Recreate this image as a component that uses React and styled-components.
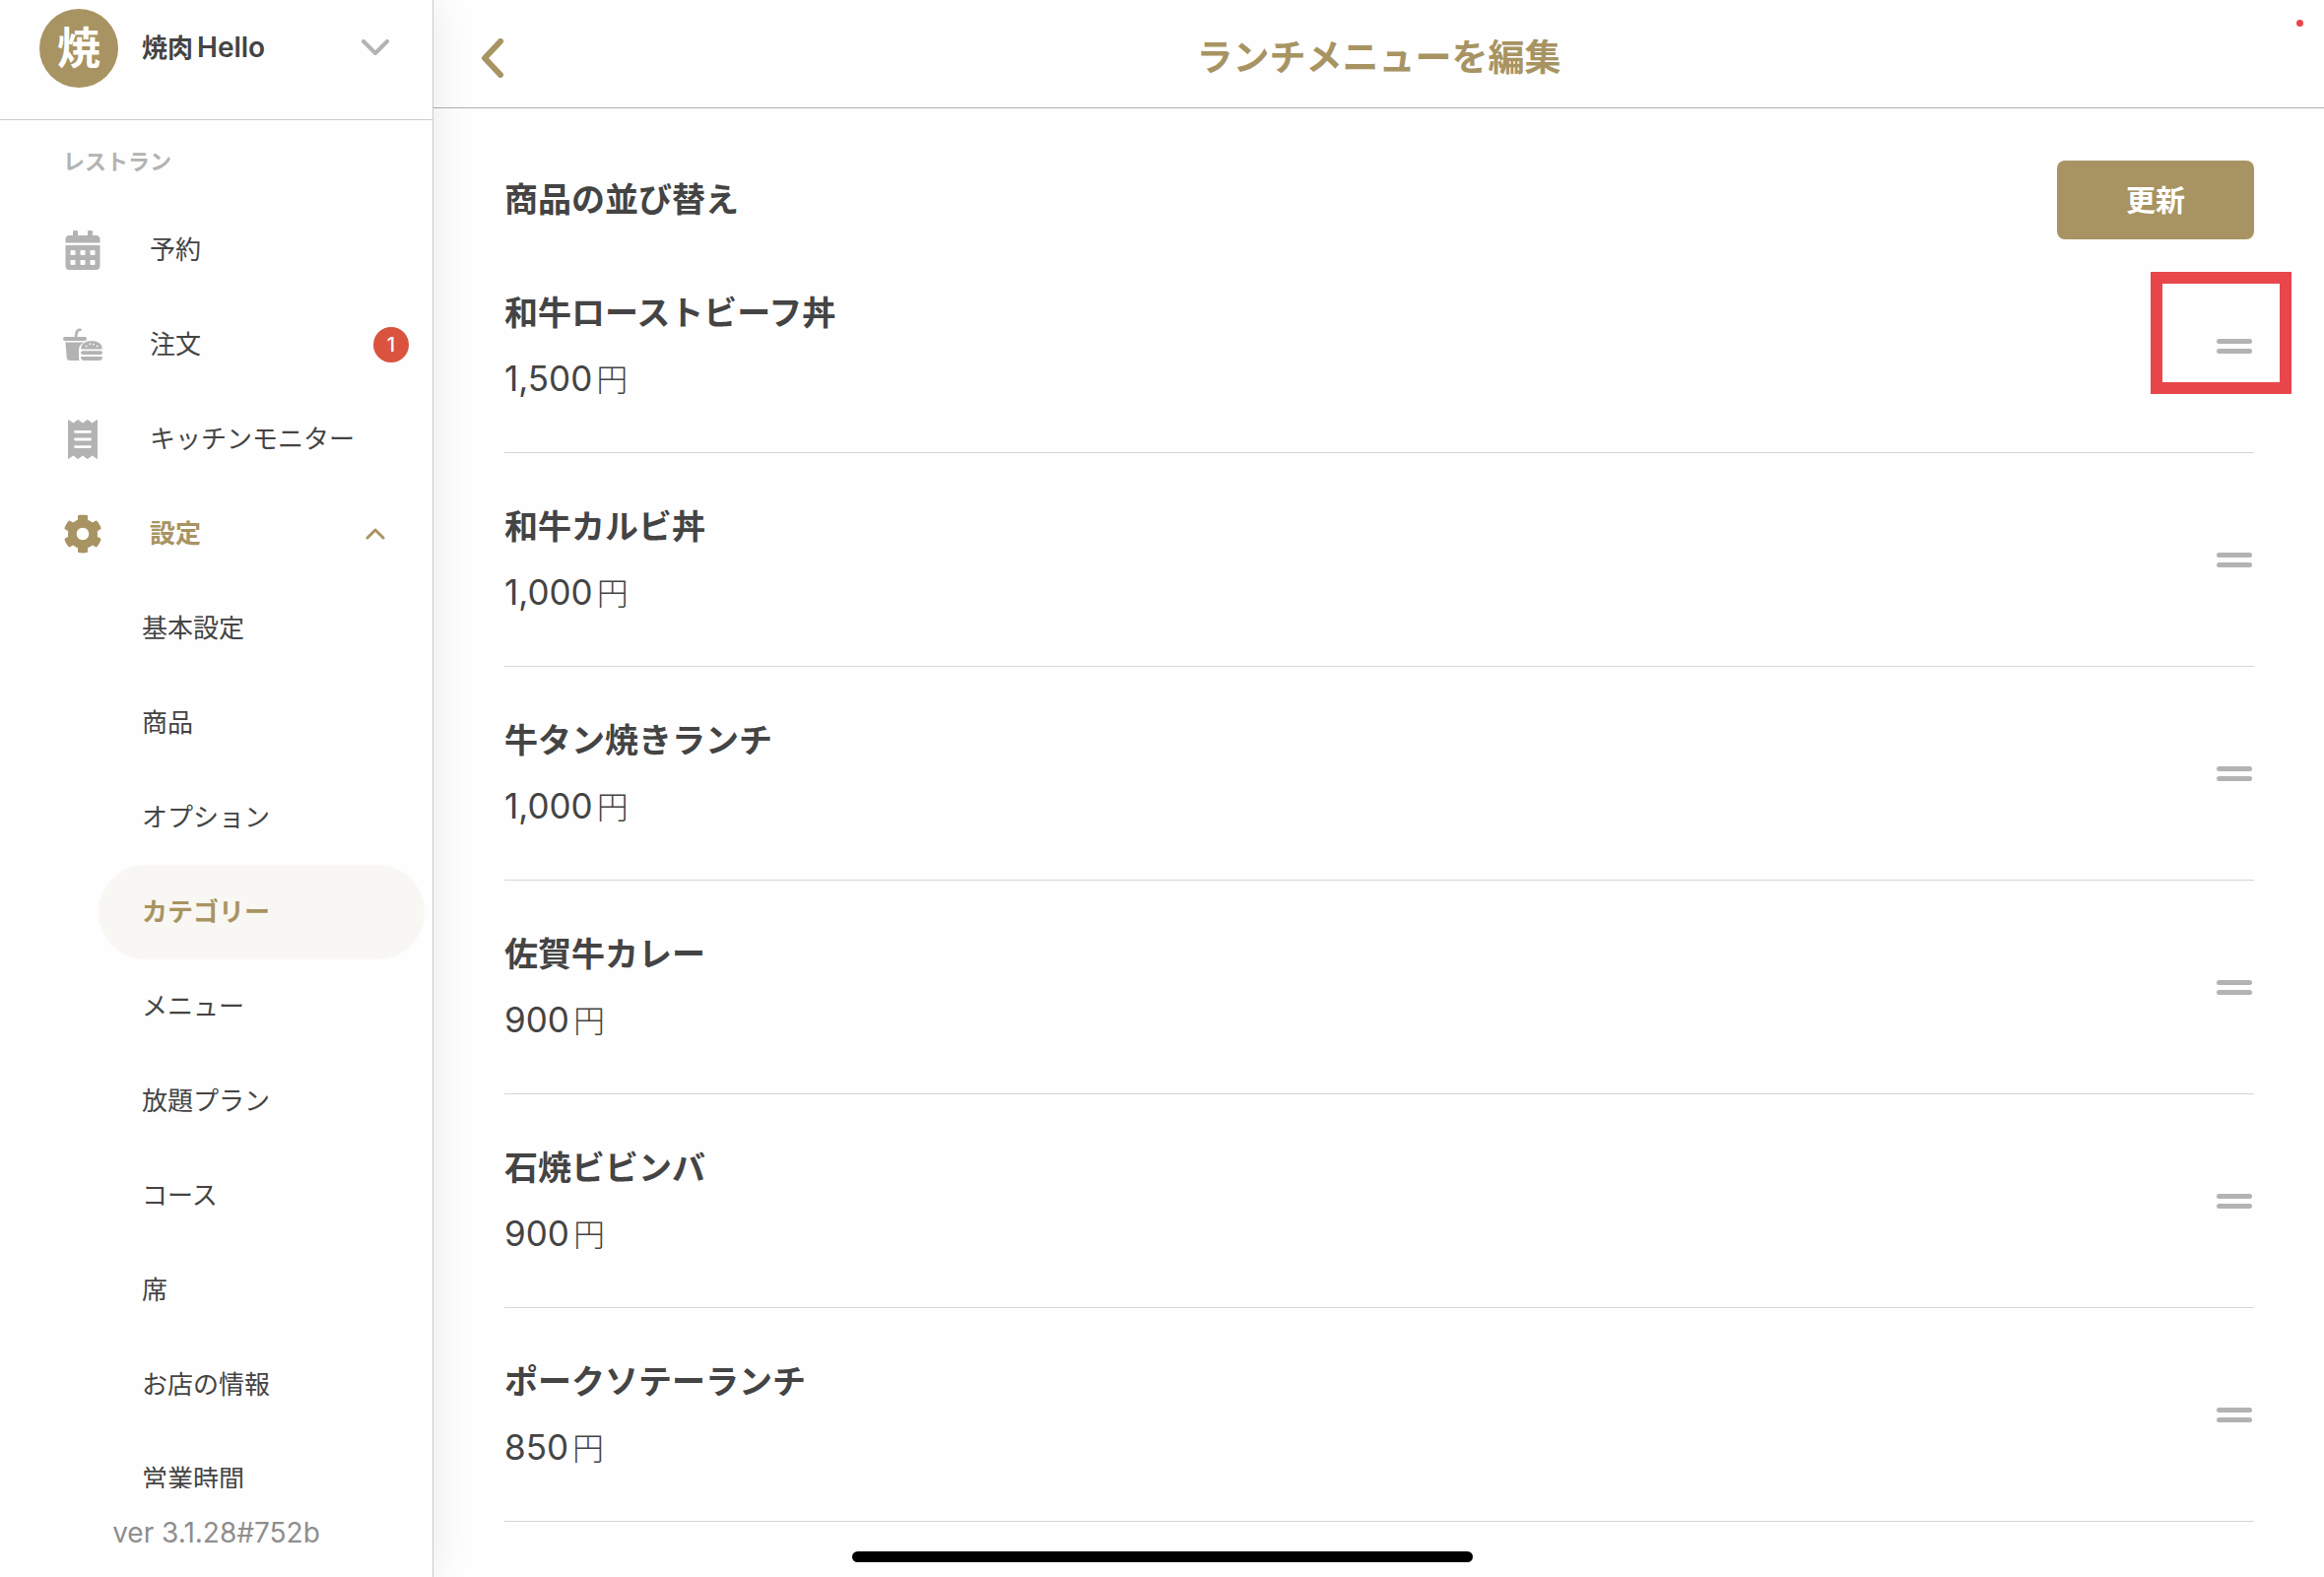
import React from "react";
import styled, { createGlobalStyle, css } from "styled-components";
import { FaCalendarAlt, FaCog } from "react-icons/fa";

const color = {
  page: "#fefefe",
  text: "#444444",
  gold: "#a89462",
  goldSoft: "#f9f7f4",
  muted: "#b3b3b3",
  version: "#8e8e8e",
  line: "#d6d6d6",
  lineStrong: "#b0b0b0",
  sideLine: "#cccccc",
  badge: "#d9533f",
  mark: "#e8464b",
};

const GlobalStyle = createGlobalStyle`
  *, *::before, *::after { box-sizing: border-box; }
  body {
    margin: 0;
    background: ${color.page};
    color: ${color.text};
    font-family: Inter, "Noto Sans CJK JP", sans-serif;
  }
  h1, h2, h3, p, ul { margin: 0; padding: 0; }
  ul { list-style: none; }
  a { color: inherit; text-decoration: none; }
  button {
    margin: 0;
    padding: 0;
    border: 0;
    background: none;
    color: inherit;
    font: inherit;
    cursor: pointer;
  }
  svg { display: block; flex: none; }
`;

const Shell = styled.div`
  position: relative;
  display: flex;
  height: 100vh;
  overflow: hidden;
`;

/* Sidebar */

const Sidebar = styled.aside`
  position: relative;
  z-index: 1;
  display: flex;
  flex: none;
  flex-direction: column;
  width: 440px;
  background: ${color.page};
  border-right: 1px solid ${color.sideLine};
  box-shadow: 0 0 40px rgba(0, 0, 0, 0.09);
`;

const StoreButton = styled.button`
  display: flex;
  flex: none;
  align-items: center;
  height: 122px;
  padding: 0 44px 24px 40px;
  border-bottom: 1px solid ${color.sideLine};
  text-align: left;
`;

const Avatar = styled.span`
  display: flex;
  align-items: center;
  justify-content: center;
  width: 80px;
  height: 80px;
  margin-right: 24px;
  border-radius: 50%;
  background: ${color.gold};
  color: #fff;
  font-size: 44px;
  font-weight: 700;
  line-height: 80px;
`;

const StoreName = styled.span`
  display: flex;
  flex: 1;
  align-items: baseline;
  gap: 4px;
  font-size: 26px;
  font-weight: 600;
  line-height: 40px;
`;

const StoreNameLatin = styled.span`
  font-size: 28px;
`;

const Nav = styled.nav`
  flex: 1;
  min-height: 0;
  overflow: hidden;
`;

const SectionLabel = styled.h2`
  padding-left: 64px;
  color: ${color.muted};
  font-size: 22px;
  font-weight: 600;
  line-height: 84px;
`;

const activeText = css`
  color: ${color.gold};
  font-weight: 700;
`;

const NavLink = styled.a`
  display: flex;
  align-items: center;
  height: 96px;
  padding: 0 24px 0 64px;
  font-size: 26px;
  line-height: 40px;
  ${(p) => p.$active && activeText}
`;

const NavIcon = styled.span`
  display: flex;
  justify-content: center;
  width: 40px;
  margin-right: 48px;
  color: ${(p) => (p.$active ? color.gold : color.muted)};
`;

const NavLabel = styled.span`
  flex: 1;
`;

const Badge = styled.span`
  width: 36px;
  border-radius: 50%;
  background: ${color.badge};
  color: #fff;
  font-size: 20px;
  font-weight: 500;
  line-height: 36px;
  text-align: center;
`;

const Caret = styled.span`
  margin-right: 24px;
`;

const SubLink = styled.a`
  display: flex;
  align-items: center;
  height: 96px;
  margin: 0 8px 0 100px;
  padding: 0 44px;
  border-radius: 48px;
  font-size: 26px;
  line-height: 40px;
  ${(p) => p.$active && activeText}
  ${(p) => p.$active && `background: ${color.goldSoft};`}
`;

const Version = styled.footer`
  flex: none;
  height: 90px;
  color: ${color.version};
  font-size: 28px;
  line-height: 90px;
  text-align: center;
`;

/* Main */

const Main = styled.main`
  flex: 1;
  min-width: 0;
`;

const TopBar = styled.header`
  display: grid;
  grid-template-columns: 80px 1fr 80px;
  align-items: center;
  height: 110px;
  padding: 8px 20px 0;
  border-bottom: 1px solid ${color.lineStrong};
`;

const BackButton = styled.button`
  display: flex;
  align-items: center;
  justify-content: center;
  height: 80px;
  color: ${color.gold};
`;

const Title = styled.h1`
  color: ${color.gold};
  font-size: 37px;
  font-weight: 700;
  line-height: 56px;
  text-align: center;
`;

const Content = styled.section`
  padding: 53px 71px 0 72px;
`;

const ContentHead = styled.div`
  display: flex;
  align-items: center;
  justify-content: space-between;
`;

const Heading = styled.h2`
  font-size: 34px;
  font-weight: 700;
  line-height: 50px;
`;

const UpdateButton = styled.button`
  width: 200px;
  height: 80px;
  border-radius: 8px;
  background: ${color.gold};
  color: #fff;
  font-size: 30px;
  font-weight: 700;
  line-height: 40px;
`;

const Item = styled.li`
  position: relative;
  display: flex;
  align-items: center;
  justify-content: space-between;
  height: 217px;
  border-bottom: 1px solid ${color.line};
`;

const ItemText = styled.div`
  display: grid;
  gap: 16px;
  padding-top: 2px;
  line-height: 50px;
`;

const ItemName = styled.h3`
  font-size: 34px;
  font-weight: 700;
  line-height: 50px;
`;

const Price = styled.p`
  display: flex;
  align-items: baseline;
  gap: 4px;
  font-size: 35px;
`;

const Yen = styled.span`
  font-size: 32px;
  font-weight: 300;
`;

const Handle = styled.button`
  display: flex;
  flex-direction: column;
  gap: 5px;
  padding: 20px 2px 20px 20px;
  cursor: grab;

  &::before,
  &::after {
    content: "";
    width: 36px;
    height: 5px;
    border-radius: 3px;
    background: ${color.muted};
  }
`;

/* Callout frame drawn over the first drag handle. */
const HandleFrame = styled.span`
  position: absolute;
  top: 33px;
  right: -38px;
  width: 143px;
  height: 124px;
  border: 12px solid ${color.mark};
  pointer-events: none;
`;

const RecordingDot = styled.span`
  position: absolute;
  top: 20px;
  right: 21px;
  width: 7px;
  height: 7px;
  border-radius: 50%;
  background: ${color.mark};
`;

const HomeIndicator = styled.span`
  position: absolute;
  z-index: 2;
  bottom: 15px;
  left: 50%;
  width: 630px;
  height: 11px;
  border-radius: 6px;
  background: #000;
  transform: translateX(-50%);
`;

function Chevron({ width, height, points, stroke, strokeWidth }) {
  return (
    <svg width={width} height={height} viewBox={`0 0 ${width} ${height}`} fill="none" aria-hidden="true">
      <polyline
        points={points}
        stroke={stroke}
        strokeWidth={strokeWidth}
        strokeLinecap="round"
        strokeLinejoin="round"
      />
    </svg>
  );
}

function FoodIcon() {
  return (
    <svg width="40" height="40" viewBox="0 0 40 40" fill="currentColor" aria-hidden="true">
      <path
        d="M13 11 L14.2 6.4 Q14.8 4.8 16.4 4.8 H17.4"
        fill="none"
        stroke="currentColor"
        strokeWidth="2.8"
        strokeLinecap="round"
      />
      <rect x="0" y="12" width="24" height="4" rx="2" />
      <path d="M2.4 17.4 H21.2 Q16.4 20 16 24.6 V34 Q16 35.2 16.8 36 H6.4 Q4 36 3.8 33.8 Z" />
      <path d="M18.2 23.4 C18.8 18.8 23.2 16 29 16 C34.8 16 39.2 18.8 39.8 23.4 Q39.8 24.4 38.8 24.4 H19.2 Q18.2 24.4 18.2 23.4 Z" />
      <g fill={color.page}>
        <circle cx="23.6" cy="21.4" r="0.9" />
        <circle cx="27.4" cy="19.2" r="0.9" />
        <circle cx="31" cy="19.6" r="0.9" />
        <circle cx="34.6" cy="21.4" r="0.9" />
      </g>
      <rect x="18" y="26.2" width="22" height="3.8" rx="1.9" />
      <path d="M19 32 H39 Q40 32 40 33 Q39.6 36 36.6 36 H21.4 Q18.4 36 18 33 Q18 32 19 32 Z" />
    </svg>
  );
}

function ReceiptIcon() {
  return (
    <svg width="30" height="40" viewBox="0 0 30 40" fill="currentColor" aria-hidden="true">
      <path d="M0 1 Q0 -0.2 1.2 0.4 L5.4 3.4 L9.4 0.4 Q10.2 -0.2 11 0.4 L15 3.4 L19 0.4 Q19.8 -0.2 20.6 0.4 L24.6 3.4 L28.8 0.4 Q30 -0.2 30 1 V39 Q30 40.2 28.8 39.6 L24.6 36.6 L20.6 39.6 Q19.8 40.2 19 39.6 L15 36.6 L11 39.6 Q10.2 40.2 9.4 39.6 L5.4 36.6 L1.2 39.6 Q0 40.2 0 39 Z" />
      <path
        d="M7.5 12.4 H22.5 M7.5 20 H22.5 M7.5 27.6 H22.5"
        stroke={color.page}
        strokeWidth="2.8"
        strokeLinecap="round"
      />
    </svg>
  );
}

const navItems = [
  { label: "予約", icon: <FaCalendarAlt size={40} /> },
  { label: "注文", icon: <FoodIcon />, badge: 1 },
  { label: "キッチンモニター", icon: <ReceiptIcon /> },
  { label: "設定", icon: <FaCog size={40} />, active: true },
];

const settings = [
  "基本設定",
  "商品",
  "オプション",
  "カテゴリー",
  "メニュー",
  "放題プラン",
  "コース",
  "席",
  "お店の情報",
  "営業時間",
];

const products = [
  { name: "和牛ローストビーフ丼", price: 1500, framed: true },
  { name: "和牛カルビ丼", price: 1000 },
  { name: "牛タン焼きランチ", price: 1000 },
  { name: "佐賀牛カレー", price: 900 },
  { name: "石焼ビビンバ", price: 900 },
  { name: "ポークソテーランチ", price: 850 },
];

export default function App() {
  return (
    <>
      <GlobalStyle />
      <Shell>
        <Sidebar>
          <StoreButton type="button">
            <Avatar>焼</Avatar>
            <StoreName>
              <span>焼肉</span>
              <StoreNameLatin>Hello</StoreNameLatin>
            </StoreName>
            <Chevron width={28} height={18} points="2,2 14,14 26,2" stroke={color.muted} strokeWidth={4} />
          </StoreButton>
          <Nav>
            <SectionLabel>レストラン</SectionLabel>
            <ul>
              {navItems.map(({ label, icon, badge, active }) => (
                <li key={label}>
                  <NavLink href="#" $active={active}>
                    <NavIcon $active={active}>{icon}</NavIcon>
                    <NavLabel>{label}</NavLabel>
                    {badge && <Badge>{badge}</Badge>}
                    {active && (
                      <Caret>
                        <Chevron width={20} height={12} points="2,10 10,2 18,10" stroke={color.gold} strokeWidth={3} />
                      </Caret>
                    )}
                  </NavLink>
                </li>
              ))}
              {settings.map((label) => (
                <li key={label}>
                  <SubLink href="#" $active={label === "カテゴリー"}>
                    {label}
                  </SubLink>
                </li>
              ))}
            </ul>
          </Nav>
          <Version>ver 3.1.28#752b</Version>
        </Sidebar>

        <Main>
          <TopBar>
            <BackButton type="button" aria-label="戻る">
              <Chevron width={24} height={40} points="20,3 4,20 20,37" stroke="currentColor" strokeWidth={6} />
            </BackButton>
            <Title>ランチメニューを編集</Title>
          </TopBar>
          <Content>
            <ContentHead>
              <Heading>商品の並び替え</Heading>
              <UpdateButton type="button">更新</UpdateButton>
            </ContentHead>
            <ul>
              {products.map(({ name, price, framed }) => (
                <Item key={name}>
                  <ItemText>
                    <ItemName>{name}</ItemName>
                    <Price>
                      {price.toLocaleString("en-US")}
                      <Yen>円</Yen>
                    </Price>
                  </ItemText>
                  <Handle type="button" aria-label={`${name}を並び替え`} />
                  {framed && <HandleFrame />}
                </Item>
              ))}
            </ul>
          </Content>
        </Main>

        <RecordingDot />
        <HomeIndicator />
      </Shell>
    </>
  );
}
